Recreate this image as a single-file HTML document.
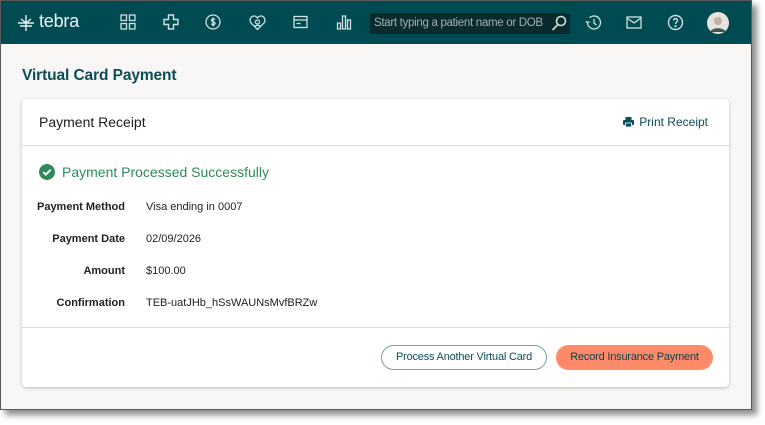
<!DOCTYPE html>
<html><head><style>
*{box-sizing:border-box;margin:0;padding:0}
body{width:765px;height:425px;background:#fff;font-family:"Liberation Sans",sans-serif;position:relative;overflow:hidden}
.frame{position:absolute;left:0;top:0;width:752px;height:410px;border:1px solid #5a5a5a;background:#f8f7f5;box-shadow:5px 5px 6px rgba(0,0,0,.45)}
.hdr{position:absolute;left:0;top:0;width:750px;height:43px;background:#004b52}
.ic{position:absolute;top:13px}
.search{position:absolute;left:369px;top:12px;width:200px;height:21px;background:#0a2a2e;border-radius:2px;color:#9fb0b2;font-size:11.5px;line-height:21px;padding-left:4px;letter-spacing:-.3px}
h1{position:absolute;left:21px;top:66px;font-size:15.5px;color:#0b4d57;font-weight:bold;letter-spacing:-.1px}
.card{position:absolute;left:21px;top:98px;width:707px;height:288px;background:#fff;border-radius:4px;box-shadow:0 1px 3px rgba(0,0,0,.25)}
.ch{height:47px;border-bottom:1px solid #dcdcdc;position:relative}
.ch .t{position:absolute;left:17px;top:15px;font-size:14px;color:#1d1d1d}
.pr{position:absolute;right:21px;top:16px;font-size:12px;color:#0b4d57}
.ok{position:absolute;left:17px;top:65px;font-size:14px;color:#2e8a5a;display:flex;align-items:center;gap:7px}
.lbl{position:absolute;width:103px;text-align:right;font-size:11px;color:#222;left:0;font-weight:bold}
.val{position:absolute;left:124px;font-size:11px;color:#222}
.foot{position:absolute;left:0;top:228px;width:707px;border-top:1px solid #dcdcdc}
.b1{position:absolute;left:359px;top:246px;width:166px;height:25px;border:1px solid #7aa0a4;border-radius:13px;font-size:11px;color:#0b4d57;text-align:center;line-height:23px;letter-spacing:-.2px}
.b2{position:absolute;left:534px;top:246px;width:157px;height:25px;background:#ff8a6a;border-radius:13px;font-size:11px;color:#0b3e45;text-align:center;line-height:25px;letter-spacing:-.2px}
</style></head><body>
<div class="frame">
<div class="hdr">
<svg class="ic" style="left:16px;top:13px" width="18" height="18" viewBox="0 0 18 18" fill="none" stroke="#e6efee" stroke-width="1.4"><path d="M9 1v16M1 9h16M4 5l5 4 5-4M3 12h12"/></svg>
<div style="position:absolute;left:38px;top:10px;color:#eef4f3;font-size:18px;letter-spacing:-.2px">tebra</div>
<svg class="ic" style="left:119px" width="16" height="16" viewBox="0 0 16 16" fill="none" stroke="#cfe0df" stroke-width="1.3"><rect x="1" y="1" width="5.5" height="5.5"/><rect x="9.5" y="1" width="5.5" height="5.5"/><rect x="1" y="9.5" width="5.5" height="5.5"/><rect x="9.5" y="9.5" width="5.5" height="5.5"/></svg>
<svg class="ic" style="left:162px" width="16" height="16" viewBox="0 0 16 16" fill="none" stroke="#cfe0df" stroke-width="1.4"><path d="M5.5 1h5v4.5H15v5h-4.5V15h-5v-4.5H1v-5h4.5z"/></svg>
<svg class="ic" style="left:204px" width="16" height="16" viewBox="0 0 16 16" fill="none" stroke="#cfe0df" stroke-width="1.3"><circle cx="8" cy="8" r="7"/><path d="M10 5.5c-.5-.8-3.5-1-3.5.8s3.5 1 3.5 3-3 1.5-3.7.5M8 3.5v9"/></svg>
<svg class="ic" style="left:248px" width="17" height="17" viewBox="0 0 17 17" fill="none" stroke="#cfe0df" stroke-width="1.3"><path d="M8.5 15.5L2 9C0 6.5 1.5 2 5 2c1.7 0 2.8 1 3.5 2 .7-1 1.8-2 3.5-2 3.5 0 5 4.5 3 7z"/><circle cx="8.5" cy="8" r="2"/><path d="M5.5 12.5c1-1.5 5-1.5 6 0"/></svg>
<svg class="ic" style="left:292px;top:14px" width="15" height="14" viewBox="0 0 15 14" fill="none" stroke="#cfe0df" stroke-width="1.3"><rect x="1" y="1.5" width="13" height="11"/><path d="M1 5h13M3.5 8.5h4"/></svg>
<svg class="ic" style="left:335px" width="16" height="16" viewBox="0 0 16 16" fill="none" stroke="#cfe0df" stroke-width="1.3"><rect x="1.5" y="9" width="3" height="6"/><rect x="6.5" y="2" width="3" height="13"/><rect x="11.5" y="6" width="3" height="9"/></svg>
<div class="search">Start typing a patient name or DOB</div>
<svg class="ic" style="left:550px;top:14px" width="16" height="16" viewBox="0 0 16 16" fill="none" stroke="#cfe0df" stroke-width="1.6"><circle cx="10" cy="6" r="4.5"/><path d="M7 9.5L1.5 15"/></svg>
<svg class="ic" style="left:584px" width="17" height="17" viewBox="0 0 17 17" fill="none" stroke="#cfe0df" stroke-width="1.3"><path d="M2.5 8.5A6.5 6.5 0 1 0 4.5 3.8M1 7l1.5 2 2-1.5M9 5v4l2.5 2"/></svg>
<svg class="ic" style="left:625px;top:15px" width="16" height="13" viewBox="0 0 16 13" fill="none" stroke="#cfe0df" stroke-width="1.3"><rect x="1" y="1" width="14" height="11"/><path d="M1 2l7 5 7-5"/></svg>
<svg class="ic" style="left:666px" width="17" height="17" viewBox="0 0 17 17" fill="none" stroke="#cfe0df" stroke-width="1.4"><circle cx="8.5" cy="8.5" r="7"/><path d="M6.5 6.5c0-2.5 4-2.5 4 0 0 1.5-2 1.5-2 3.5"/><circle cx="8.5" cy="12.3" r=".5" fill="#cfe0df"/></svg>
<svg class="ic" style="left:706px;top:11px" width="22" height="22" viewBox="0 0 22 22"><circle cx="11" cy="11" r="11" fill="#e8e2dc"/><circle cx="11" cy="9" r="4" fill="#bfb3a7"/><path d="M3 20c2-5 14-5 16 0" fill="#3f5556"/></svg>
</div>
<h1>Virtual Card Payment</h1>
<div class="card">
<div class="ch"><div class="t">Payment Receipt</div>
<div class="pr"><svg width="11" height="10" viewBox="0 0 11 10" style="vertical-align:-1px;margin-right:5px"><rect x="2.5" y="0" width="6" height="3" fill="#0b4d57"/><rect x="0" y="3" width="11" height="5" rx="1" fill="#0b4d57"/><rect x="2.5" y="6" width="6" height="4" fill="#0b4d57" stroke="#fff" stroke-width=".8"/></svg>Print Receipt</div></div>
<div class="ok"><svg width="16" height="16" viewBox="0 0 16 16"><circle cx="8" cy="8" r="8" fill="#2e8a5a"/><path d="M4.3 8.2l2.5 2.4 4.9-4.9" stroke="#fff" stroke-width="1.9" fill="none"/></svg>Payment Processed Successfully</div>
<div class="lbl" style="top:102px">Payment Method</div><div class="val" style="top:102px">Visa ending in 0007</div>
<div class="lbl" style="top:134px">Payment Date</div><div class="val" style="top:134px">02/09/2026</div>
<div class="lbl" style="top:166px">Amount</div><div class="val" style="top:166px">$100.00</div>
<div class="lbl" style="top:198px">Confirmation</div><div class="val" style="top:198px">TEB-uatJHb_hSsWAUNsMvfBRZw</div>
<div class="foot"></div>
<div class="b1">Process Another Virtual Card</div>
<div class="b2">Record Insurance Payment</div>
</div>
</div>
</body></html>
